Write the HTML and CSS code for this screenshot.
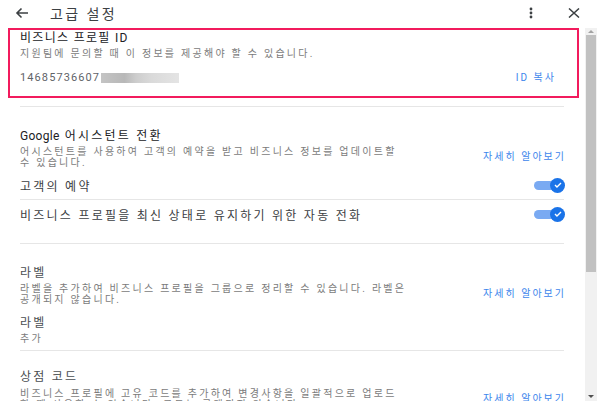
FILE: index.html
```html
<!DOCTYPE html>
<html lang="ko">
<head>
  <meta charset="UTF-8">
  <title>고급 설정</title>
  <link rel="stylesheet" href="styles.css">
</head>
<body>
<div class="header">
  <svg class="back" width="14" height="12" viewBox="0 0 14 12">
    <path d="M13 6H2M6.5 1.5L2 6l4.5 4.5" fill="none" stroke="#3c4043" stroke-width="1.6"/>
  </svg>
  <span class="title">고급 설정</span>
  <span class="spacer"></span>
  <svg class="more" width="4" height="12" viewBox="0 0 4 12">
    <circle cx="2" cy="2" r="1.4" fill="#3c4043"/>
    <circle cx="2" cy="6" r="1.4" fill="#3c4043"/>
    <circle cx="2" cy="10" r="1.4" fill="#3c4043"/>
  </svg>
  <svg class="close" width="12" height="10" viewBox="0 0 12 10">
    <path d="M1 0.5l10 9M11 0.5l-10 9" fill="none" stroke="#3c4043" stroke-width="1.5"/>
  </svg>
</div>

<div class="main">
  <div class="content">
    <div class="id-box">
      <div class="sec-title boxed">비즈니스 프로필 ID</div>
      <div class="desc">지원팀에 문의할 때 이 정보를 제공해야 할 수 있습니다.</div>
      <div class="id-row">
        <span class="id-num">14685736607<span class="blurred"></span></span>
        <a class="link" href="#">ID 복사</a>
      </div>
    </div>

    <div class="list">
      <hr class="divider">

      <div class="section first">
        <div class="sec-title"><span class="latin">Google</span> 어시스턴트 전환</div>
        <div class="desc-row">
          <div class="desc wrap">어시스턴트를 사용하여 고객의 예약을 받고 비즈니스 정보를 업데이트할<br>수 있습니다.</div>
          <a class="link" href="#">자세히 알아보기</a>
        </div>
        <div class="toggle-row">
          <span class="row-label">고객의 예약</span>
          <span class="toggle"><span class="knob"><svg width="8" height="6" viewBox="0 0 8 6"><path d="M1 3l2 2 4-4" fill="none" stroke="#fff" stroke-width="1.4"/></svg></span></span>
        </div>
        <hr class="divider short">
        <div class="toggle-row">
          <span class="row-label">비즈니스 프로필을 최신 상태로 유지하기 위한 자동 전화</span>
          <span class="toggle"><span class="knob"><svg width="8" height="6" viewBox="0 0 8 6"><path d="M1 3l2 2 4-4" fill="none" stroke="#fff" stroke-width="1.4"/></svg></span></span>
        </div>
      </div>

      <hr class="divider">

      <div class="section labels">
        <div class="sec-title plain">라벨</div>
        <div class="desc-row">
          <div class="desc wrap">라벨을 추가하여 비즈니스 프로필을 그룹으로 정리할 수 있습니다. 라벨은<br>공개되지 않습니다.</div>
          <a class="link" href="#">자세히 알아보기</a>
        </div>
        <div class="sub-title">라벨</div>
        <div class="sub-value">추가</div>
      </div>

      <hr class="divider">

      <div class="section last">
        <div class="sec-title plain">상점 코드</div>
        <div class="desc-row">
          <div class="desc wrap">비즈니스 프로필에 고유 코드를 추가하여 변경사항을 일괄적으로 업로드<br>할 때 사용할 수 있습니다. 코드는 공개되지 않습니다.</div>
          <a class="link" href="#">자세히 알아보기</a>
        </div>
      </div>
    </div>
  </div>

  <div class="scrollbar">
    <span class="arrow up"></span>
    <span class="thumb"></span>
    <span class="arrow down"></span>
  </div>
</div>
</body>
</html>
```

FILE: styles.css
```css
body {
  margin: 0;
  width: 600px;
  height: 401px;
  overflow: hidden;
  background-color: #fff;
  font-family: Roboto, "Noto Sans CJK KR", sans-serif;
  color: #3c4043;
}

.header {
  height: 26px;
  padding-bottom: 2px;
  display: flex;
  align-items: center;
}

.back {
  margin-left: 15px;
}

.title {
  margin-left: 21px;
  font-size: 14px;
  letter-spacing: 2.4px;
  color: #3c4043;
}

.spacer {
  flex: 1;
}

.more {
  margin-right: 35px;
}

.close {
  margin-right: 20px;
}

.main {
  height: 373px;
  display: flex;
}

.content {
  flex: 1;
  overflow: hidden;
}

.id-box {
  height: 70px;
  box-sizing: border-box;
  margin: 0 6px 0 8px;
  padding: 1px 23px 0 10px;
  border: 2px solid #f21b5d;
}

.sec-title {
  font-size: 12px;
  line-height: 14px;
  letter-spacing: 2.2px;
  color: #202124;
}

.sec-title .latin {
  letter-spacing: 0.3px;
}

.sec-title.boxed {
  letter-spacing: 1.3px;
}

.sec-title.plain {
  color: #4a4e52;
}

.desc {
  margin-top: 2px;
  font-size: 10px;
  line-height: 14px;
  letter-spacing: 2.25px;
  color: #7b7b7b;
}

.id-row {
  margin-top: 10px;
  display: flex;
  justify-content: space-between;
  align-items: center;
  line-height: 14px;
}

.id-num {
  font-size: 11px;
  letter-spacing: 1.1px;
  color: #5f6368;
  display: flex;
  align-items: center;
}

.blurred {
  display: inline-block;
  width: 78px;
  height: 10px;
  margin-left: 1px;
  background: linear-gradient(90deg, #c4c4c4 0, #b8b8b8 30%, #cdcdcd 45%, #dadada 65%, #e4e4e4 100%);
}

.link {
  font-size: 10px;
  line-height: 14px;
  letter-spacing: 2px;
  margin-right: -2px;
  color: #3d86ec;
  text-decoration: none;
  white-space: nowrap;
}

.list {
  padding: 0 21px 0 20px;
}

.divider {
  margin: 0;
  border: 0;
  border-top: 1px solid #e6e6e6;
}

.list > .divider:first-child {
  margin-top: 8px;
}

.section {
  padding: 22px 0 20px;
}

.section.labels {
  padding-bottom: 4px;
}

.section.last {
  padding-top: 19px;
}

.desc-row {
  margin-top: 3px;
  display: flex;
  justify-content: space-between;
  align-items: center;
}

.section.last .desc-row {
  margin-top: 4px;
}

.desc-row .desc {
  margin-top: 0;
  line-height: 11px;
}

.wrap {
  white-space: nowrap;
}

.toggle-row {
  height: 18px;
  display: flex;
  justify-content: space-between;
  align-items: center;
  margin: 8px 0 5px;
}

.divider.short + .toggle-row {
  margin-top: 5px;
  margin-bottom: 0;
}

.row-label {
  font-size: 12px;
  letter-spacing: 2.25px;
  color: #3c4043;
}

.toggle {
  position: relative;
  width: 30px;
  height: 9px;
  border-radius: 5px;
  background-color: #7aaaf2;
}

.knob {
  position: absolute;
  right: -1px;
  top: -3px;
  width: 15px;
  height: 15px;
  border-radius: 50%;
  background-color: #1a73e8;
  display: flex;
  align-items: center;
  justify-content: center;
}

.sub-title {
  margin-top: 11px;
  font-size: 12px;
  line-height: 14px;
  letter-spacing: 2.2px;
  color: #4a4e52;
}

.sub-value {
  margin-top: 2px;
  font-size: 10px;
  line-height: 14px;
  letter-spacing: 2.25px;
  color: #7b7b7b;
}

.scrollbar {
  width: 12px;
  margin-right: 3px;
  background-color: #f1f1f1;
  display: flex;
  flex-direction: column;
  align-items: center;
}

.arrow {
  width: 0;
  height: 0;
  border-left: 3px solid transparent;
  border-right: 3px solid transparent;
}

.arrow.up {
  margin-top: 2px;
  border-bottom: 3px solid #a3a3a3;
}

.arrow.down {
  margin-top: auto;
  margin-bottom: 3px;
  border-top: 3px solid #505050;
}

.thumb {
  width: 10px;
  height: 237px;
  margin-top: 2px;
  background-color: #c1c1c1;
}
```
